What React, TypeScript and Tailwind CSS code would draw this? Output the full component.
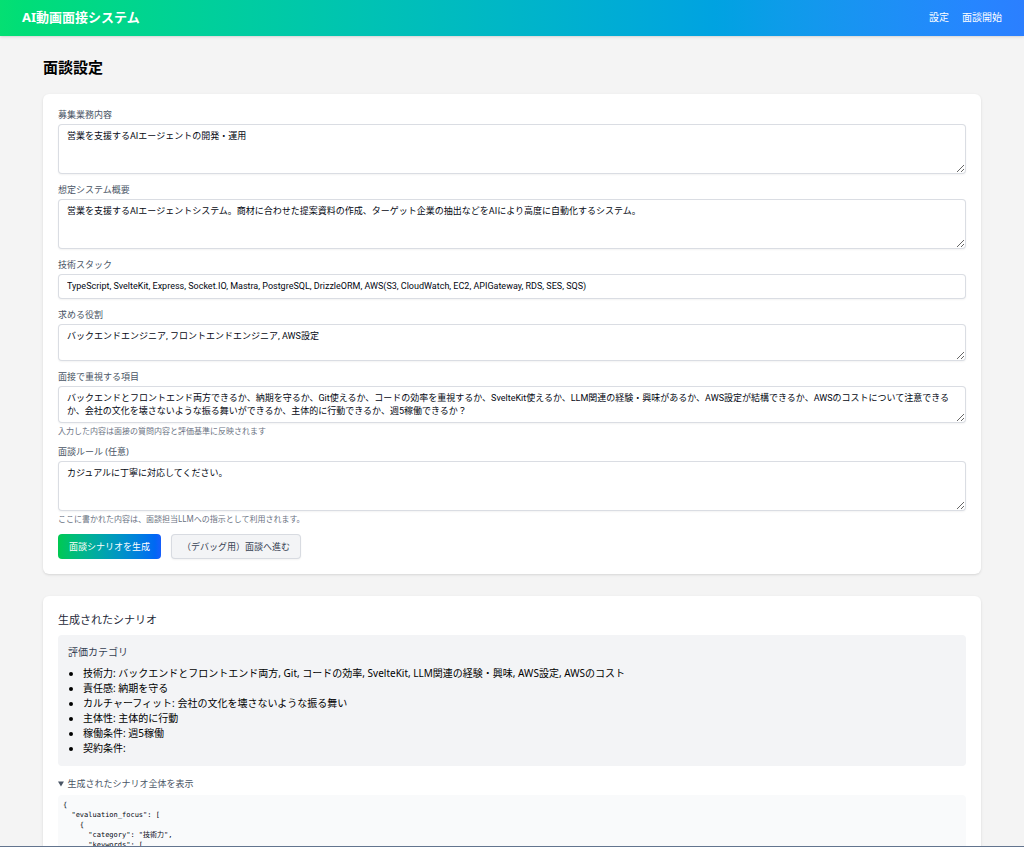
type Field = {
  id: string
  label: string
  value: string
  rows?: number
  hint?: string
}

const FIELDS: Field[] = [
  {
    id: 'job-description',
    label: '募集業務内容',
    value: '営業を支援するAIエージェントの開発・運用',
    rows: 3,
  },
  {
    id: 'system-overview',
    label: '想定システム概要',
    value:
      '営業を支援するAIエージェントシステム。商材に合わせた提案資料の作成、ターゲット企業の抽出などをAIにより高度に自動化するシステム。',
    rows: 3,
  },
  {
    id: 'tech-stack',
    label: '技術スタック',
    value:
      'TypeScript, SvelteKit, Express, Socket.IO, Mastra, PostgreSQL, DrizzleORM, AWS(S3, CloudWatch, EC2, APIGateway, RDS, SES, SQS)',
  },
  {
    id: 'roles',
    label: '求める役割',
    value: 'バックエンドエンジニア, フロントエンドエンジニア, AWS設定',
    rows: 2,
  },
  {
    id: 'focus-points',
    label: '面接で重視する項目',
    value:
      'バックエンドとフロントエンド両方できるか、納期を守るか、Git使えるか、コードの効率を重視するか、SvelteKit使えるか、LLM関連の経験・興味があるか、AWS設定が結構できるか、AWSのコストについて注意できるか、会社の文化を壊さないような振る舞いができるか、主体的に行動できるか、週5稼働できるか？',
    rows: 2,
    hint: '入力した内容は面接の質問内容と評価基準に反映されます',
  },
  {
    id: 'rules',
    label: '面談ルール (任意)',
    value: 'カジュアルに丁寧に対応してください。',
    rows: 3,
    hint: 'ここに書かれた内容は、面談担当LLMへの指示として利用されます。',
  },
]

const CATEGORIES = [
  {
    category: '技術力',
    keywords: [
      'バックエンドとフロントエンド両方',
      'Git',
      'コードの効率',
      'SvelteKit',
      'LLM関連の経験・興味',
      'AWS設定',
      'AWSのコスト',
    ],
  },
  { category: '責任感', keywords: ['納期を守る'] },
  { category: 'カルチャーフィット', keywords: ['会社の文化を壊さないような振る舞い'] },
  { category: '主体性', keywords: ['主体的に行動'] },
  { category: '稼働条件', keywords: ['週5稼働'] },
  { category: '契約条件', keywords: [] },
]

const CONTROL_CLASS =
  "block w-full rounded-sm border border-gray-300/80 bg-white px-2 pt-[5px] font-[Roboto,'Noto_Sans_CJK_JP',sans-serif] text-[9px] leading-[13px] text-gray-950 shadow-xs"

function FormField({ field }: { field: Field }) {
  return (
    <div>
      <label htmlFor={field.id} className="mb-[3px] block text-[9px] leading-3 text-gray-600">
        {field.label}
      </label>
      {field.rows ? (
        <textarea
          id={field.id}
          rows={field.rows}
          defaultValue={field.value}
          className={`${CONTROL_CLASS} pb-1`}
        />
      ) : (
        <input
          id={field.id}
          type="text"
          defaultValue={field.value}
          className={`${CONTROL_CLASS} pb-[5px]`}
        />
      )}
      {field.hint && (
        <p className="mt-[3px] text-[8px] leading-[10px] text-gray-500">{field.hint}</p>
      )}
    </div>
  )
}

export default function App() {
  return (
    <div className="h-screen overflow-hidden border-b border-slate-500 bg-[#f4f4f4] font-['Noto_Sans','Noto_Sans_CJK_JP',sans-serif] text-[10px] leading-[15px] text-black">
      <header className="flex h-9 items-center justify-between bg-linear-to-r from-green-400 to-blue-500 px-[22px] pb-0.5 text-white shadow">
        <div className="text-[13px] font-bold">AI動画面接システム</div>
        <nav className="flex gap-[13px]">
          <a href="#settings">設定</a>
          <a href="#interview">面談開始</a>
        </nav>
      </header>

      <main className="mx-auto w-11/12 max-w-[938px] pt-5">
        <h1 className="text-[15px] leading-[22px] font-bold">面談設定</h1>

        <form className="mt-4 flex flex-col gap-[10px] rounded-md bg-white p-[15px] shadow">
          {FIELDS.map((field) => (
            <FormField key={field.id} field={field} />
          ))}
          <div className="flex gap-[10px]">
            <button
              type="button"
              className="rounded-sm bg-linear-to-r from-green-500 to-blue-600 px-[11px] py-[5px] text-[9px] text-white"
            >
              面談シナリオを生成
            </button>
            <button
              type="button"
              className="rounded-sm border border-gray-300/80 bg-gray-100 px-[10px] py-1 text-[9px] text-gray-700 shadow-xs"
            >
              （デバッグ用）面談へ進む
            </button>
          </div>
        </form>

        <section className="mt-[22px] rounded-md bg-white p-[15px] shadow">
          <h2 className="text-[11px] leading-[18px] text-gray-800">生成されたシナリオ</h2>
          <div className="mt-[6px] rounded-sm bg-gray-100 p-[10px]">
            <h3 className="text-gray-700">評価カテゴリ</h3>
            <ul className="mt-[6px] list-disc pl-[15px]">
              {CATEGORIES.map(({ category, keywords }) => (
                <li key={category}>
                  {category}: {keywords.join(', ')}
                </li>
              ))}
            </ul>
          </div>

          <details open className="mt-[10px]">
            <summary className="text-[9px] leading-[15px] text-gray-600">
              生成されたシナリオ全体を表示
            </summary>
            <pre className="mt-1 rounded-sm bg-gray-50 p-[5px] font-['DejaVu_Sans_Mono','Noto_Sans_CJK_JP',monospace] text-[7px] leading-[10px] text-gray-950">
              {JSON.stringify({ evaluation_focus: CATEGORIES }, null, 2)}
            </pre>
          </details>
        </section>
      </main>
    </div>
  )
}
